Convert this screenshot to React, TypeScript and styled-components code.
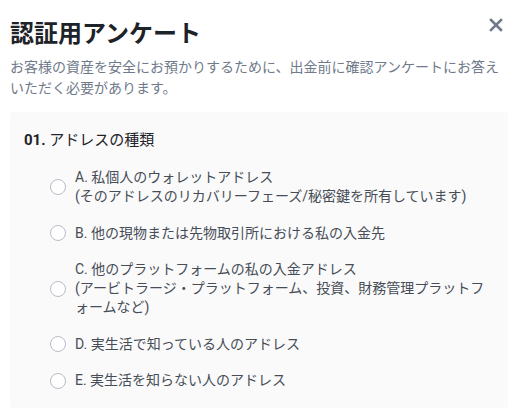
import React from 'react';
import styled, { createGlobalStyle } from 'styled-components';

const GlobalStyle = createGlobalStyle`
  body {
    margin: 0;
    background: #ffffff;
    font-family: Roboto, "Noto Sans CJK JP", sans-serif;
  }
`;

const Modal = styled.div`
  width: 516px;
  height: 420px;
  box-sizing: border-box;
  padding: 18px 8px 0 10px;
  background: #fff;
`;

const Header = styled.div`
  display: flex;
  align-items: flex-start;
  justify-content: space-between;
`;

const Title = styled.h1`
  margin: 0;
  font-size: 24px;
  line-height: 32px;
  font-weight: 700;
  color: #1e2329;
`;

const CloseButton = styled.button`
  border: none;
  background: none;
  padding: 0;
  margin: -1px 4px 0 0;
  width: 16px;
  height: 16px;
  display: flex;
  align-items: center;
  justify-content: center;
  cursor: pointer;
`;

const Description = styled.p`
  margin: 7px 0 0;
  font-size: 14px;
  line-height: 21px;
  color: #707a8a;
`;

const QuestionCard = styled.div`
  margin-top: 13px;
  background: #fafafa;
  border-radius: 4px;
  padding: 17px 14px 18px 14px;
  width: 498px;
  box-sizing: border-box;
`;

const QuestionTitle = styled.div`
  font-size: 15px;
  line-height: 22px;
  color: #1e2329;

  b {
    font-weight: 700;
  }
`;

const Options = styled.div`
  display: flex;
  flex-direction: column;
  gap: 17.6px;
  margin-top: 17px;
  padding-left: 26px;
`;

const Option = styled.label`
  display: flex;
  align-items: center;
  gap: 9px;
  cursor: pointer;
`;

const Radio = styled.span`
  flex: none;
  width: 14px;
  height: 14px;
  border-radius: 50%;
  border: 1px solid #b7bdc6;
  background: #fff;
`;

const OptionText = styled.span`
  font-size: 14px;
  line-height: 19px;
  color: #474d57;
`;

const options = [
  ['A. 私個人のウォレットアドレス', '(そのアドレスのリカバリーフェーズ/秘密鍵を所有しています)'],
  ['B. 他の現物または先物取引所における私の入金先'],
  ['C. 他のプラットフォームの私の入金アドレス', '(アービトラージ・プラットフォーム、投資、財務管理プラットフォームなど)'],
  ['D. 実生活で知っている人のアドレス'],
  ['E. 実生活を知らない人のアドレス'],
];

export default function App() {
  return (
    <>
      <GlobalStyle />
      <Modal>
        <Header>
          <Title>認証用アンケート</Title>
          <CloseButton aria-label="close">
            <svg width="14" height="14" viewBox="0 0 14 14">
              <path d="M2 2 L12 12 M12 2 L2 12" stroke="#707a8a" strokeWidth="2.6" strokeLinecap="square" />
            </svg>
          </CloseButton>
        </Header>
        <Description>
          お客様の資産を安全にお預かりするために、出金前に確認アンケートにお答えいただく必要があります。
        </Description>
        <QuestionCard>
          <QuestionTitle>
            <b>01.</b> アドレスの種類
          </QuestionTitle>
          <Options>
            {options.map((lines, i) => (
              <Option key={i}>
                <Radio />
                <OptionText>
                  {lines.map((l, j) => (
                    <React.Fragment key={j}>
                      {j > 0 && <br />}
                      {l}
                    </React.Fragment>
                  ))}
                </OptionText>
              </Option>
            ))}
          </Options>
        </QuestionCard>
      </Modal>
    </>
  );
}
